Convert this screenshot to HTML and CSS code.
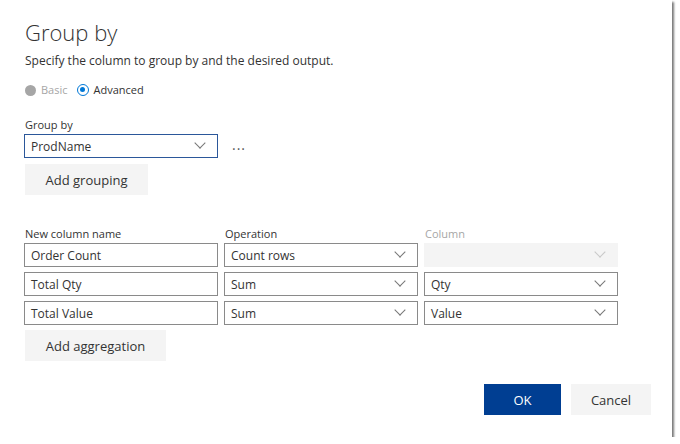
FILE: index.html
```html
<!DOCTYPE html>
<html lang="en">
<head>
    <meta charset="UTF-8">
    <title>Group by</title>
    <link rel="stylesheet" href="styles.css">
</head>
<body>
    <div class="dialog">
        <h1 class="dialog__title">Group by</h1>
        <p class="dialog__desc">Specify the column to group by and the desired output.</p>

        <div class="mode">
            <label class="mode__item disabled"><span class="radio radio--off"></span>Basic</label>
            <label class="mode__item"><span class="radio radio--on"></span>Advanced</label>
        </div>

        <div class="field-label">Group by</div>
        <div class="group-row">
            <div class="select select--focus">
                <span>ProdName</span>
                <i class="chevron"></i>
            </div>
            <span class="more">&middot;&middot;&middot;</span>
        </div>
        <button class="btn btn--light btn--grouping">Add grouping</button>

        <div class="agg">
            <div class="agg__head">New column name</div>
            <div class="agg__head">Operation</div>
            <div class="agg__head disabled">Column</div>

            <div class="input">Order Count</div>
            <div class="select"><span>Count rows</span><i class="chevron"></i></div>
            <div class="select select--disabled"><span></span><i class="chevron"></i></div>

            <div class="input">Total Qty</div>
            <div class="select"><span>Sum</span><i class="chevron"></i></div>
            <div class="select"><span>Qty</span><i class="chevron"></i></div>

            <div class="input">Total Value</div>
            <div class="select"><span>Sum</span><i class="chevron"></i></div>
            <div class="select"><span>Value</span><i class="chevron"></i></div>
        </div>
        <button class="btn btn--light btn--agg">Add aggregation</button>

        <div class="dialog__footer">
            <button class="btn btn--primary">OK</button>
            <button class="btn btn--light btn--cancel">Cancel</button>
        </div>
    </div>
</body>
</html>
```

FILE: styles.css
```css
body{
    margin: 0;
    background: #fff;
    font-family: "Open Sans", "Noto Sans", sans-serif;
    font-size: 12px;
    color: #333;
}
.dialog{
    width: 672px;
    height: 437px;
    box-sizing: border-box;
    padding: 0 0 0 24px;
    background: #fff;
    box-shadow: 2px 2px 2px #7a7a7a;
    display: flex;
    flex-direction: column;
    align-items: flex-start;
}
.dialog__title{
    margin: 15px 0 0 1px;
    font-size: 22px;
    font-weight: 300;
    line-height: 34px;
    color: #333;
}
.dialog__desc{
    margin: 2px 0 0 1px;
    line-height: 20px;
    color: #333;
}
.mode{
    display: flex;
    gap: 9px;
    margin: 10px 0 0 1px;
    line-height: 18px;
    font-size: 11px;
}
.mode__item{
    display: flex;
    align-items: center;
    gap: 5px;
}
.disabled{
    color: #a6a6a6;
}
.radio{
    width: 12px;
    height: 12px;
    box-sizing: border-box;
    border-radius: 50%;
}
.radio--off{
    width: 11px;
    height: 11px;
    background: #a6a6a6;
}
.radio--on{
    border: 1.5px solid #0078d7;
    position: relative;
}
.radio--on::after{
    content: "";
    position: absolute;
    left: 2px;
    top: 2px;
    width: 5px;
    height: 5px;
    border-radius: 50%;
    background: #0078d7;
}
.field-label{
    margin: 18px 0 0 1px;
    line-height: 16px;
    font-size: 11px;
}
.group-row{
    display: flex;
    align-items: center;
    margin-top: 1px;
}
.more{
    margin-left: 14px;
    letter-spacing: 1px;
    color: #555;
    font-size: 14px;
    padding-top: 4px;
}
.select,
.input{
    width: 194px;
    height: 24px;
    box-sizing: border-box;
    border: 1px solid #8a8a8a;
    padding: 0 11px 0 6px;
    display: flex;
    align-items: center;
    justify-content: space-between;
    background: #fff;
}
.select--focus{
    border-color: #2b579a;
}
.select--disabled{
    border-color: #f4f4f4;
    background: #f4f4f4;
}
.select--disabled .chevron{
    border-color: #c8c8c8;
}
.chevron{
    width: 8px;
    height: 8px;
    box-sizing: border-box;
    border-right: 1px solid #777;
    border-bottom: 1px solid #777;
    transform: translateY(-3px) rotate(45deg);
    margin-right: 2px;
}
.btn{
    border: 0;
    font-family: inherit;
    font-size: 13px;
    color: #333;
    cursor: pointer;
}
.btn--light{
    background: #f4f4f4;
}
.btn--grouping{
    margin: 6px 0 0 1px;
    width: 123px;
    height: 31px;
}
.agg{
    display: grid;
    grid-template-columns: 194px 194px 194px;
    column-gap: 6px;
    row-gap: 5px;
    margin-top: 32px;
}
.agg__head{
    line-height: 14px;
    font-size: 11px;
    margin: 0 0 -3px 1px;
}
.btn--agg{
    margin: 5px 0 0 1px;
    width: 141px;
    height: 31px;
}
.dialog__footer{
    display: flex;
    gap: 10px;
    margin: 23px 0 0 460px;
}
.btn--primary{
    width: 77px;
    height: 31px;
    background: #003e92;
    color: #fff;
}
.btn--cancel{
    width: 80px;
    height: 31px;
}
```
